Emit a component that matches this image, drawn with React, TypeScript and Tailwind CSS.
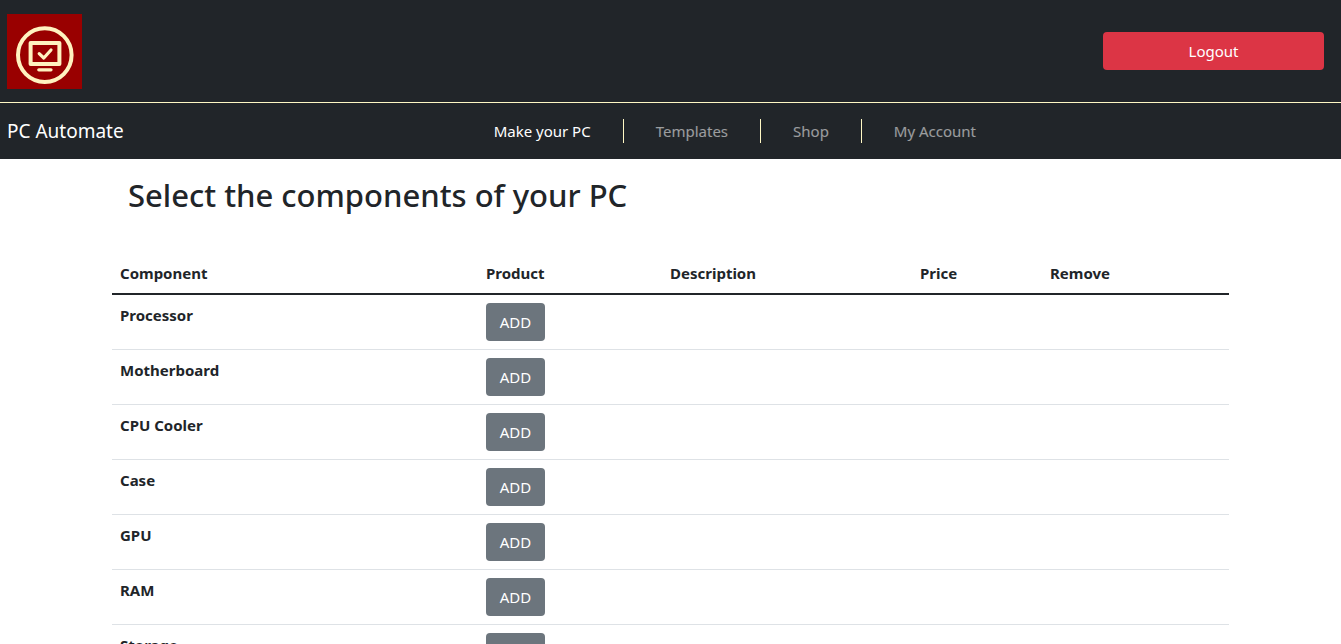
const components = ["Processor", "Motherboard", "CPU Cooler", "Case", "GPU", "RAM", "Storage"];

const columns = [
  { label: "Component", width: "w-[366px]" },
  { label: "Product", width: "w-[184px]" },
  { label: "Description", width: "w-[250px]" },
  { label: "Price", width: "w-[130px]" },
  { label: "Remove", width: "" },
];

const links = ["Make your PC", "Templates", "Shop", "My Account"];

function Logo() {
  return (
    <svg viewBox="0 0 75 75" className="size-[75px]" role="img" aria-label="PC Automate logo">
      <rect width="75" height="75" fill="#990000" />
      <g fill="none" stroke="#fff2c0" strokeLinecap="round" strokeLinejoin="round">
        <circle cx="37.8" cy="41.1" r="26.8" strokeWidth="4" />
        <rect x="23.6" y="29" width="28.8" height="21" strokeWidth="4" />
        <path d="M32.2 39.6l4.6 4.4 7.2-8" strokeWidth="3.2" />
        <path d="M31.8 55.8H44" strokeWidth="3.2" />
      </g>
    </svg>
  );
}

export default function App() {
  return (
    <div className="min-h-screen bg-white font-['Noto_Sans',sans-serif] text-[15px] leading-6 text-[#212529]">
      <header className="bg-[#212529] text-white">
        <div className="flex items-center justify-between border-b border-[#fff8c4] pt-3.5 pr-[17px] pb-[13px] pl-[7px]">
          <a href="#home">
            <Logo />
          </a>
          <button type="button" className="mb-0.5 h-[38px] w-[221px] rounded-sm bg-[#dc3545] text-center text-white">
            Logout
          </button>
        </div>
        <nav className="flex h-14 items-center px-[7px]">
          <a href="#home" className="mr-3 text-[19px]">
            PC Automate
          </a>
          <ul className="flex flex-1 justify-center divide-x divide-[#fff8c4]">
            {links.map((link, i) => (
              <li key={link} className="px-8">
                <a href="#nav" className={i === 0 ? "text-white" : "text-white/55"}>
                  {link}
                </a>
              </li>
            ))}
          </ul>
        </nav>
      </header>
      <main className="mx-auto max-w-[1141px] px-3">
        <h1 className="px-4 pt-4 text-[31px] leading-10 font-medium">Select the components of your PC</h1>
        <table className="mt-[38px] w-full table-fixed text-left">
          <thead>
            <tr className="border-b-2 border-[#212529]">
              {columns.map((c) => (
                <th key={c.label} scope="col" className={`p-2 font-bold ${c.width}`}>
                  {c.label}
                </th>
              ))}
            </tr>
          </thead>
          <tbody>
            {components.map((name) => (
              <tr key={name} className="border-b border-[#dee2e6]">
                <th scope="row" className="p-2 align-top font-bold">
                  {name}
                </th>
                <td className="p-2">
                  <button
                    type="button"
                    aria-label={`ADD ${name}`}
                    className="block h-[38px] w-[59px] rounded-sm bg-[#6c757d] text-center text-white"
                  >
                    ADD
                  </button>
                </td>
                <td />
                <td />
                <td />
              </tr>
            ))}
          </tbody>
        </table>
      </main>
    </div>
  );
}
